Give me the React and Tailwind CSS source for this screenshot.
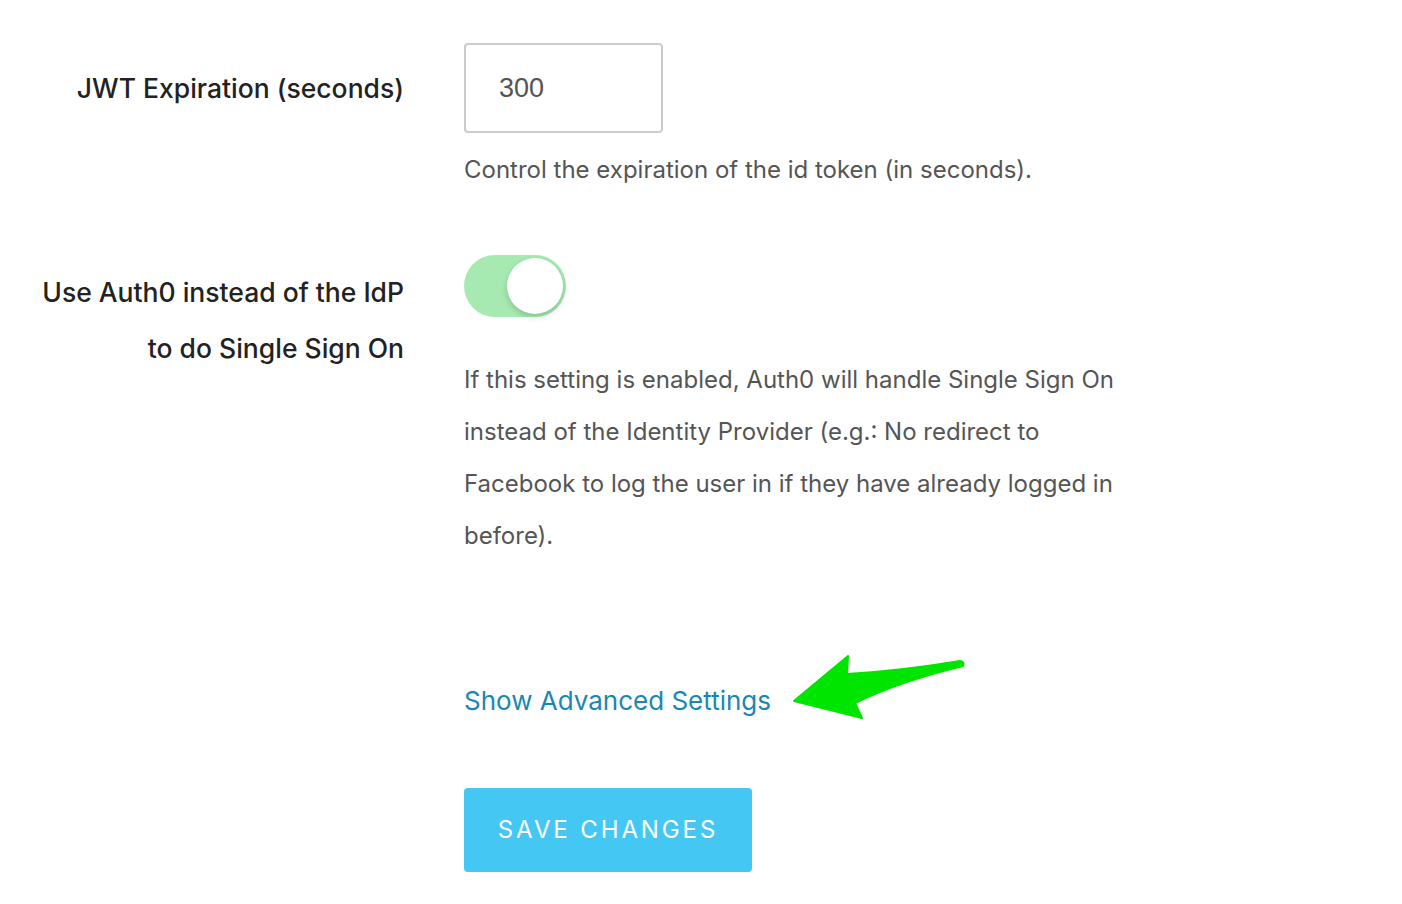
import { useState } from "react";

function Toggle({ on, setOn }) {
    return (
        <button
            onClick={() => setOn(!on)}
            className={`relative w-[102px] h-[62px] rounded-full ${on ? "bg-[#a6eab2]" : "bg-[#e5e5e5]"} flex items-center px-[3px] ${on ? "justify-end" : "justify-start"}`}
        >
            <span className="block w-[56px] h-[56px] rounded-full bg-white shadow-[0_3px_6px_rgba(0,0,0,0.18)]" />
        </button>
    );
}

export default function App() {
    const [sso, setSso] = useState(true);

    return (
        <div
            className="bg-white min-h-[904px] w-full pt-[43px] text-[24px]"
            style={{ fontFamily: "Inter, 'Open Sans', sans-serif" }}
        >
            <div className="grid grid-cols-[404px_1fr] gap-x-[60px]">
                <label className="text-right text-[#222] text-[26.5px] font-medium leading-[56px] mt-[17px]">
                    JWT Expiration (seconds)
                </label>
                <div>
                    <input
                        defaultValue="300"
                        className="w-[199px] h-[90px] border-2 border-[#cccccc] rounded-[4px] px-[33px] text-[#555] text-[27px] outline-none"
                        style={{ fontFamily: "'Liberation Sans', Arial, sans-serif" }}
                    />
                    <p className="text-[#555] leading-[52px] mt-[11px]">
                        Control the expiration of the id token (in seconds).
                    </p>
                </div>

                <label className="text-right text-[#222] text-[26.5px] font-medium leading-[56px] mt-[68px]">
                    Use Auth0 instead of the IdP
                    <br />
                    to do Single Sign On
                </label>
                <div className="mt-[59px]">
                    <Toggle on={sso} setOn={setSso} />
                    <p className="text-[#555] leading-[52px] mt-[37px] max-w-[670px]">
                        If this setting is enabled, Auth0 will handle Single Sign On
                        instead of the Identity Provider (e.g.: No redirect to
                        Facebook to log the user in if they have already logged in
                        before).
                    </p>

                    <div className="relative mt-[121px] leading-[36px]">
                        <a className="text-[#1a87b3] text-[26px] cursor-pointer">
                            Show Advanced Settings
                        </a>
                        <svg
                            className="absolute left-[326px] top-[-32px]"
                            width="180"
                            height="72"
                            viewBox="0 0 180 72"
                        >
                            <path
                                d="M4 50 L58 5 L57 23 Q110 20 170 10 Q175 11 173 15 Q110 30 65 52 L72 67 Z"
                                fill="#00e500"
                                stroke="#00e500"
                                strokeLinejoin="round"
                                strokeWidth="2"
                            />
                        </svg>
                    </div>

                    <button className="mt-[68px] w-[288px] h-[84px] bg-[#45c7f4] rounded-[4px] text-white tracking-[0.12em] text-[24px]">
                        SAVE CHANGES
                    </button>
                </div>
            </div>
        </div>
    );
}
